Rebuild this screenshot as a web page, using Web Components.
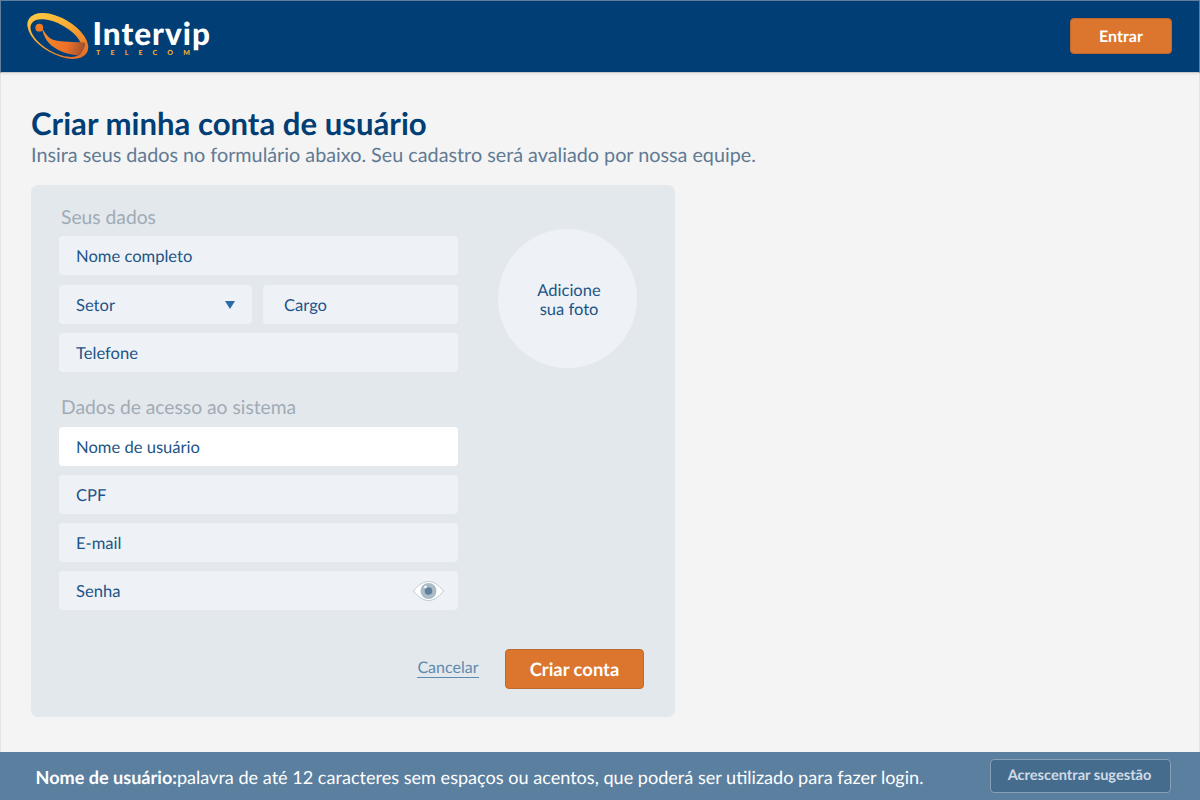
<!DOCTYPE html>
<html lang="pt-BR"><head><meta charset="utf-8"><title>Criar conta</title>
<style>
html,body{margin:0;padding:0;height:100%}
body{font-family:Lato,"Open Sans",sans-serif;background:#f4f4f4;text-rendering:geometricPrecision}
</style></head><body>
<iv-page></iv-page>
<script>
function def(name, html){
  customElements.define(name, class extends HTMLElement{
    constructor(){super();this.attachShadow({mode:'open'}).innerHTML=html;}
  });
}
def('iv-logo',`<style>
:host{display:block;position:relative;width:190px;height:50px;margin-top:-1px}
svg{position:absolute;left:0;top:0}
.n{position:absolute;left:65.500px;top:9px;font:900 31.500px/26px Lato,sans-serif;letter-spacing:1px;color:#fff;white-space:nowrap}
.t{position:absolute;left:69px;top:39px;font:900 7px/7px Lato,sans-serif;letter-spacing:10.2px;color:#eeb030;white-space:nowrap}
</style>
<svg width="70" height="50" viewBox="27 11 70 50">
<defs>
<linearGradient id="g" gradientUnits="userSpaceOnUse" x1="30" y1="14" x2="88" y2="56"><stop offset="0" stop-color="#ffd245"/><stop offset=".45" stop-color="#f8a733"/><stop offset=".75" stop-color="#ef7f28"/><stop offset="1" stop-color="#d8642a"/></linearGradient>
<linearGradient id="h" gradientUnits="userSpaceOnUse" x1="42" y1="34" x2="86" y2="46"><stop offset="0" stop-color="#f4892c"/><stop offset=".6" stop-color="#ee7028"/><stop offset="1" stop-color="#9c4f30"/></linearGradient>
</defs>
<g transform="rotate(30 57.8 36)">
<path fill="url(#g)" fill-rule="evenodd" d="M24.200 36a33.600 18 0 1 0 67.200 0a33.600 18 0 1 0 -67.200 0ZM28.800 38.500a28.800 14 0 1 0 57.600 0a28.800 14 0 1 0 -57.600 0Z"/>
</g>
<path fill="url(#h)" d="M42 28C46 34 48 38 54 40C62 42 74 42 85 42.500C86 46 83 52 78 55.500C70 54.500 60 52 52 46C47 42 43 35 42 28Z"/>
<circle cx="39.300" cy="27.700" r="3.900" fill="#ee7a28"/>
</svg>
<span class="n">Intervip</span><span class="t">TELECOM</span>`);
def('iv-button',`<style>
:host{display:inline-flex;align-items:center;justify-content:center;box-sizing:border-box;background:#dc752d;border:1px solid #be6a2f;border-radius:4px;color:#fff;font-family:Lato,sans-serif;font-weight:700}
</style><slot></slot>`);
def('iv-header',`<style>
:host{display:flex;position:relative;box-sizing:border-box;height:73px;background:#003e75;border:1px solid #5f7f9d;border-bottom:1px solid #c9c9c9;box-shadow:0 1px 2px rgba(0,0,0,.08);align-items:center;justify-content:space-between;padding:0 27px 0 26px;flex:none}
iv-button{width:102px;height:36px;font-size:16px;margin-top:-1px;padding-top:1px}
</style><iv-logo></iv-logo><iv-button>Entrar</iv-button>`);
def('iv-field',`<style>
:host{display:flex;align-items:center;box-sizing:border-box;height:39px;padding:1px 12px 0 17px;background:#eef2f6;border-radius:4px;color:#1d5487;font-size:16.570px;font-family:Lato,sans-serif}
:host([active]){background:#fff}
.s{flex:1}
</style><span class="s"><slot></slot></span><slot name="end"></slot>`);
def('iv-heading',`<style>
:host{display:block;font:400 19.250px/22px Lato,sans-serif;color:#a0abb6;padding:2px 0 0 2px}
</style><slot></slot>`);
def('iv-photo',`<style>
:host{display:flex;align-items:center;justify-content:center;box-sizing:border-box;padding:2px 0 0 3px;width:139px;height:139px;border-radius:50%;background:#eef2f6;color:#1d5487;font:400 16.500px/19px Lato,sans-serif;text-align:center;flex:none}
</style><slot></slot>`);
def('iv-eye',`<style>:host{display:block;width:33px;height:24px;margin-right:1px;margin-top:-1px}</style>
<svg width="33" height="24" viewBox="0 0 33 24">
<path d="M1.500 12C7 5 12 2.500 16.500 2.500S26 5 31.500 12C26 19 21 21.500 16.500 21.500S7 19 1.500 12Z" fill="#fff" stroke="#bccbd2" stroke-width="1"/>
<circle cx="16.500" cy="12" r="8" fill="#a9bcc7"/><circle cx="16.500" cy="12" r="3.800" fill="#5f7f9d"/><circle cx="13.500" cy="8" r="1.300" fill="#fff"/></svg>`);
def('iv-form',`<style>
:host{display:grid;grid-template-columns:399px 1fr;column-gap:40px;box-sizing:border-box;width:644px;height:532px;background:#e3e8ec;border-radius:7px;padding:20px 28px 0;align-content:start}
.col{display:flex;flex-direction:column}
.col iv-heading{margin-bottom:7px}
.col iv-field{margin-bottom:9px}
.first{margin-bottom:10px !important}
.row{display:flex;gap:11px;margin-bottom:9px}
.row iv-field{margin:0;flex:none}
.sec{margin-top:14px;margin-bottom:8px !important}
.tel{padding-top:0}
.tri{display:block;width:0;height:0;border-left:5.500px solid transparent;border-right:5.500px solid transparent;border-top:8.500px solid #2b6ca6;margin-right:5px;margin-top:-1px}
.photo{padding-top:24px}
.acts{grid-column:1/-1;display:flex;justify-content:flex-end;align-items:center;margin-top:30px;padding-right:3px}
.cancel{font:400 16px/19px Lato,sans-serif;color:#5f8bb0;border-bottom:1px solid #5f8bb0;margin-right:26.500px;margin-top:-2px}
iv-button{width:139px;height:40px;font-size:18.400px;padding-bottom:1px}
</style>
<div class="col">
<iv-heading>Seus dados</iv-heading>
<iv-field class="first">Nome completo</iv-field>
<div class="row"><iv-field style="width:193px">Setor<span class="tri" slot="end"></span></iv-field><iv-field style="width:195px;padding-left:21px">Cargo</iv-field></div>
<iv-field class="tel" style="padding-top:0">Telefone</iv-field>
<iv-heading class="sec">Dados de acesso ao sistema</iv-heading>
<iv-field active>Nome de usuário</iv-field>
<iv-field>CPF</iv-field>
<iv-field>E-mail</iv-field>
<iv-field>Senha<iv-eye slot="end"></iv-eye></iv-field>
</div>
<div class="photo"><iv-photo>Adicione<br>sua foto</iv-photo></div>
<div class="acts"><span class="cancel">Cancelar</span><iv-button>Criar conta</iv-button></div>`);
def('iv-footer',`<style>
:host{display:flex;align-items:center;justify-content:space-between;box-sizing:border-box;height:48px;flex:none;background:#5b7f9f;color:#fff;font:400 18.090px/20px Lato,sans-serif;padding:0 29px 0 36px}
b{font-weight:700}
.txt{padding-top:2px;margin-left:-.5px;white-space:nowrap}
.sug{display:flex;align-items:center;justify-content:center;box-sizing:border-box;width:181px;height:34px;padding-right:2px;border:1px solid #85a0b8;border-radius:4px;background:#466c8d;color:#cfdbe5;font:700 14.600px/1 Lato,sans-serif}
</style>
<span class="txt"><b>Nome de usuário:</b>palavra de até 12 caracteres sem espaços ou acentos, que poderá ser utilizado para fazer login.</span>
<span class="sug">Acrescentrar sugestão</span>`);
def('iv-page',`<style>
:host{display:flex;flex-direction:column;height:800px;width:1200px;font-family:Lato,sans-serif;overflow:hidden}
main{flex:1;box-sizing:border-box;padding:32px 30px 0;border-left:1px solid #e4e4e4;border-right:1px solid #e4e4e4;background:#f4f4f4}
h1{margin:0 0 3px;font:700 31.150px/36px Lato,sans-serif;color:#003e75}
p{margin:0 0 19px;font:400 19.770px/22px Lato,sans-serif;color:#617a93}
</style>
<iv-header></iv-header>
<main><h1>Criar minha conta de usuário</h1><p>Insira seus dados no formulário abaixo. Seu cadastro será avaliado por nossa equipe.</p><iv-form></iv-form></main>
<iv-footer></iv-footer>`);
</script></body></html>
